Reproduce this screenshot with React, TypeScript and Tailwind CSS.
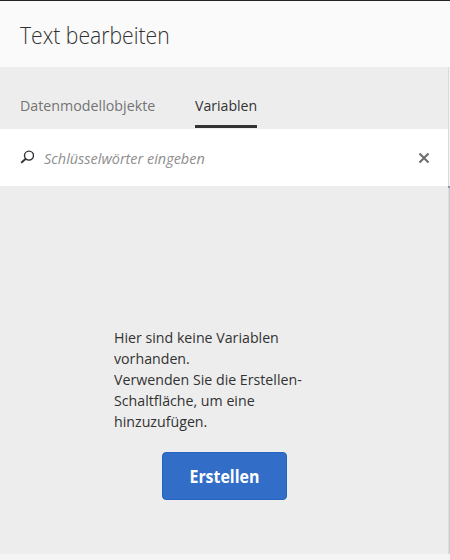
import React from "react";

const messageLines = [
  "Hier sind keine Variablen",
  "vorhanden.",
  "Verwenden Sie die Erstellen-",
  "Schaltfläche, um eine",
  "hinzuzufügen.",
];

export default function App() {
  return (
    <div className="flex h-[560px] w-[450px] flex-col overflow-hidden border-t border-[#252328] bg-[#f4f4f4] font-['Open_Sans','Noto_Sans',sans-serif] text-[#323232]">
      <header className="flex h-[66px] shrink-0 items-center bg-[#fafafa] px-5 pt-[2px]">
        <h1 className="origin-left scale-x-[0.882] whitespace-nowrap text-[24px] leading-8 font-light">Text bearbeiten</h1>
      </header>
      <div className="flex h-[487px] shrink-0">
        <main className="flex w-[448px] flex-col bg-[#ededed]">
          <nav className="flex h-[62px] shrink-0 gap-10 pl-5 pb-px text-[15px] leading-6">
            <button className="flex w-[135px] items-center pt-[15px] text-[#747474]">
              <span className="origin-left scale-x-[0.95] whitespace-nowrap">Datenmodellobjekte</span>
            </button>
            <button className="flex w-[62px] items-center border-b-3 border-[#323232] pt-[18px]">
              <span className="origin-left scale-x-[0.94] whitespace-nowrap">Variablen</span>
            </button>
          </nav>
          <div className="flex h-[57px] shrink-0 items-center bg-white pl-5 pr-[18px]">
            <svg className="mb-px h-[14px] w-[14px]" viewBox="0 0 14 14" fill="none" stroke="#323232">
              <circle cx="9" cy="5.6" r="4.5" strokeWidth="1.4" />
              <path d="M5.8 8.8 1.2 12.8" strokeWidth="1.9" />
            </svg>
            <span className="ml-[10px] flex-1 origin-left scale-x-[0.963] whitespace-nowrap text-[15px] leading-5 text-[#8e8e8e] italic">Schlüsselwörter eingeben</span>
            <svg className="h-3 w-3" viewBox="0 0 12 12" stroke="#6b6b6b" strokeWidth="2">
              <path d="m1.5 1.5 9 9m0-9-9 9" />
            </svg>
          </div>
          <section className="flex flex-1 flex-col pt-[141px]">
            <div className="ml-[114px] flex origin-left scale-x-[0.946] flex-col text-[15px] leading-[21px]">
              {messageLines.map((line) => (
                <p key={line} className="whitespace-nowrap">{line}</p>
              ))}
            </div>
            <button className="mt-[20px] ml-[162px] flex h-12 w-[125px] items-center justify-center rounded border border-[#2464bf] bg-[#326ec8] text-[17.5px] font-bold text-white">
              <span className="scale-x-[0.91]">Erstellen</span>
            </button>
          </section>
        </main>
        <div className="flex w-0.5 flex-col">
          <div className="h-[119px] border-l border-[#dcdcdc] bg-[#f2f2f2]" />
          <div className="h-0.5 bg-[#8895b5]" />
          <div className="flex-1 border-l border-[#dedede] bg-[#cacaca]" />
        </div>
      </div>
    </div>
  );
}
